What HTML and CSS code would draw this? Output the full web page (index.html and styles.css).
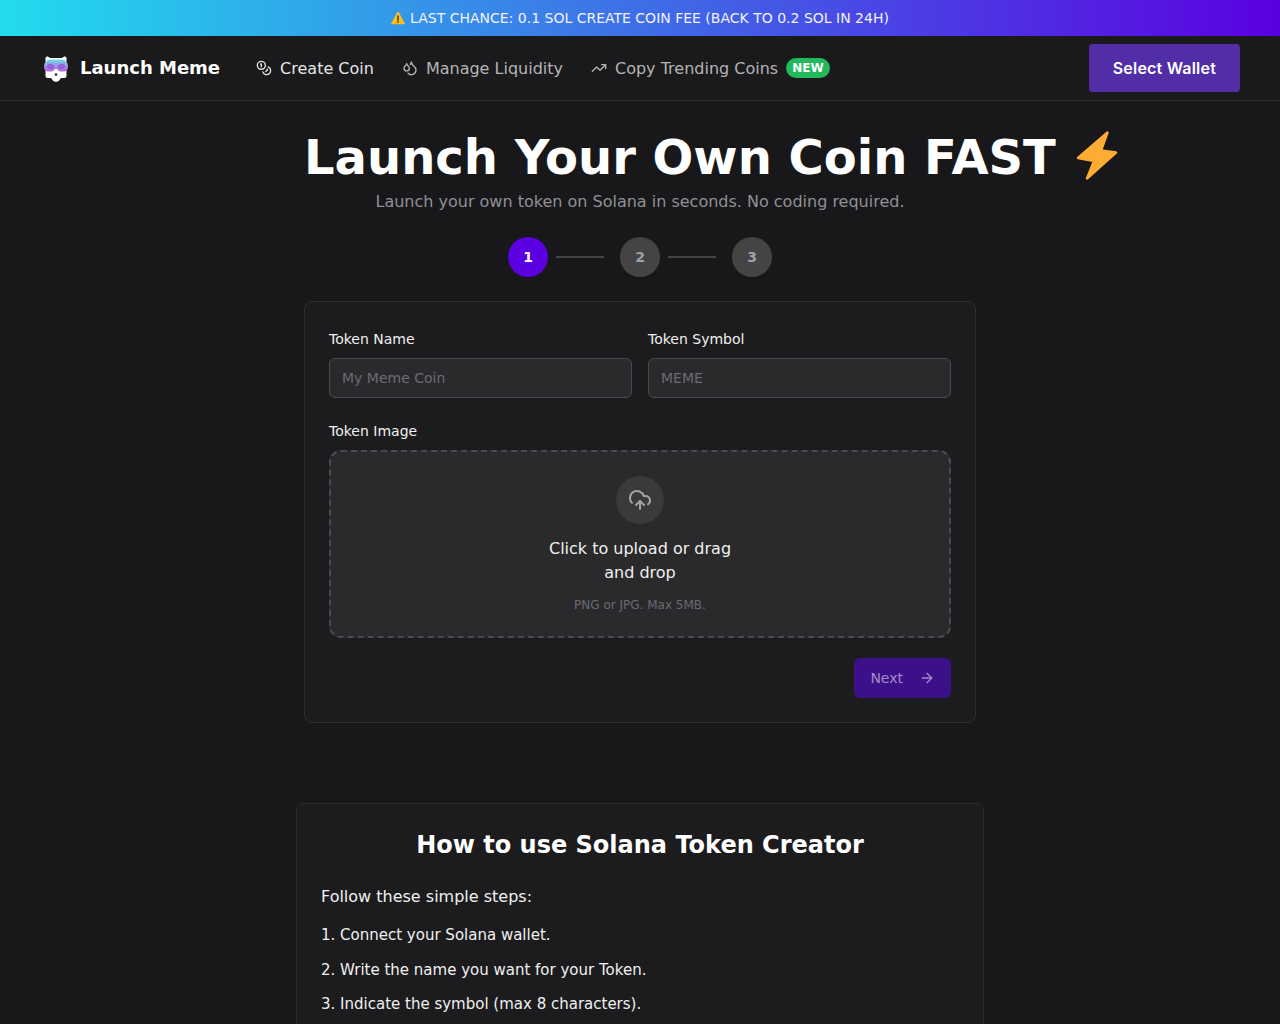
FILE: index.html
```html
<!DOCTYPE html>
<html lang="en">
<head>
    <meta charset="UTF-8">
    <meta name="viewport" content="width=device-width, initial-scale=1.0">
    <title>Launch Meme</title>
    <link rel="stylesheet" href="styles.css">
</head>
<body>

    <!-- Promo banner -->
    <div class="banner">
        <svg class="banner-icon" viewBox="0 0 16 16">
            <path d="M8 1.2 15.2 14.4H.8z" fill="#fbbf24" stroke="#fbbf24" stroke-width="1.2" stroke-linejoin="round"/>
            <path d="M8 5.6v4.6" stroke="#3a2c08" stroke-width="1.6" stroke-linecap="round"/>
            <circle cx="8" cy="12.4" r="1" fill="#3a2c08"/>
        </svg>
        <span>LAST CHANCE: 0.1 SOL CREATE COIN FEE (BACK TO 0.2 SOL IN 24H)</span>
    </div>

    <header class="nav">
        <div class="nav-left">
            <a class="brand">
                <svg class="brand-logo" viewBox="0 0 24 26">
                    <defs>
                        <linearGradient id="goggle" x1="0" y1="0" x2="0" y2="1">
                            <stop offset="0" stop-color="#6fe0e6"/>
                            <stop offset="0.4" stop-color="#8fa8e6"/>
                            <stop offset="1" stop-color="#b860dc"/>
                        </linearGradient>
                    </defs>
                    <path d="M1.500 6V1.500L3.500.3 6 2h12L20.500.3l2 1.200V6zM1.500 13h21v7q0 2-2 2H18q-1.500 0-2 1.300-1 2.700-4 2.700t-4-2.700Q7.500 22 6 22H3.500q-2 0-2-2z" fill="#fff"/>
                    <path d="M6 3.500h12q3 0 5 3 1 1.500 1 4 0 5-4.500 5H17q-2 0-3-1.500-1-1-2-1t-2 1Q9 15.500 7 15.500H4.500Q0 15.500 0 10.500q0-2.500 1-4 2-3 5-3z" fill="url(#goggle)"/>
                    <ellipse cx="6.500" cy="10.500" rx="3.500" ry="2.700" fill="#9a5fd8"/>
                    <ellipse cx="17.500" cy="10.500" rx="3.500" ry="2.700" fill="#9a5fd8"/>
                    <circle cx="12" cy="18.500" r="1.300" fill="#2a1f3a"/>
                </svg>
                <span class="brand-name">Launch Meme</span>
            </a>
            <nav class="nav-links">
                <a class="nav-link nav-link-active">
                    <svg class="icon" viewBox="0 0 24 24"><circle cx="8" cy="8" r="6"/><path d="M18.090 10.370A6 6 0 1 1 10.340 18"/><path d="M7 6h1v4"/><path d="m16.710 13.880.7.71-2.820 2.820"/></svg>
                    Create Coin
                </a>
                <a class="nav-link">
                    <svg class="icon" viewBox="0 0 24 24"><path d="M7 16.300c2.200 0 4-1.830 4-4.050 0-1.160-.57-2.260-1.710-3.190S7.290 6.750 7 5.300c-.29 1.450-1.140 2.840-2.290 3.760S3 11.100 3 12.250c0 2.220 1.800 4.050 4 4.050z"/><path d="M12.560 6.600A10.970 10.970 0 0 0 14 3.020c.5 2.500 2 4.900 4 6.500s3 3.500 3 5.500a6.980 6.980 0 0 1-11.910 4.970"/></svg>
                    Manage Liquidity
                </a>
                <a class="nav-link">
                    <svg class="icon" viewBox="0 0 24 24"><polyline points="22 7 13.500 15.500 8.500 10.500 2 17"/><polyline points="16 7 22 7 22 13"/></svg>
                    Copy Trending Coins
                    <span class="badge">NEW</span>
                </a>
            </nav>
        </div>
        <button class="wallet-btn">Select Wallet</button>
    </header>

    <main class="content">
        <section class="hero">
            <h1 class="hero-title">
                Launch Your Own Coin FAST
                <svg class="bolt" viewBox="0 0 42 51"><polygon points="31.500,2.500 25,20.500 40,22.500 11,48.500 18,31 2,28" fill="#ffac33" stroke="#ffac33" stroke-width="2.500" stroke-linejoin="round"/></svg>
            </h1>
            <p class="hero-sub">Launch your own token on Solana in seconds. No coding required.</p>
        </section>

        <!-- Steps -->
        <div class="steps">
            <div class="step step-active">1</div>
            <div class="step-line"></div>
            <div class="step">2</div>
            <div class="step-line"></div>
            <div class="step">3</div>
        </div>

        <form class="card">
            <div class="field-row">
                <div class="field">
                    <label class="label">Token Name</label>
                    <input class="input" type="text" placeholder="My Meme Coin">
                </div>
                <div class="field">
                    <label class="label">Token Symbol</label>
                    <input class="input" type="text" placeholder="MEME">
                </div>
            </div>

            <div class="field field-image">
                <label class="label">Token Image</label>
                <div class="dropzone">
                    <div class="upload-circle">
                        <svg class="icon upload-icon" viewBox="0 0 24 24"><path d="M12 13v8"/><path d="M4 14.899A7 7 0 1 1 15.710 8h1.790a4.500 4.500 0 0 1 2.500 8.242"/><path d="m8 17 4-4 4 4"/></svg>
                    </div>
                    <p class="drop-text">Click to upload or drag and drop</p>
                    <p class="drop-hint">PNG or JPG. Max 5MB.</p>
                </div>
            </div>

            <div class="form-actions">
                <button class="next-btn" type="button" disabled>
                    Next
                    <svg class="icon" viewBox="0 0 24 24"><path d="M5 12h14"/><path d="m12 5 7 7-7 7"/></svg>
                </button>
            </div>
        </form>

        <section class="howto">
            <h2 class="howto-title">How to use Solana Token Creator</h2>
            <p class="howto-intro">Follow these simple steps:</p>
            <p class="howto-step">1. Connect your Solana wallet.</p>
            <p class="howto-step">2. Write the name you want for your Token.</p>
            <p class="howto-step">3. Indicate the symbol (max 8 characters).</p>
        </section>
    </main>

</body>
</html>
```

FILE: styles.css
```css
* {
    box-sizing: border-box;
}

html,
body {
    height: 1024px;
    overflow: hidden;
}

body {
    margin: 0;
    background-color: #18181a;
    color: #fff;
    font-family: "DejaVu Sans", sans-serif;
}

.banner {
    height: 36px;
    display: flex;
    align-items: center;
    justify-content: center;
    gap: 5px;
    background: linear-gradient(90deg, #22dcee, #5b00e0);
    font-size: 14px;
    color: #f2f2ff;
}

.banner-icon {
    width: 14px;
    height: 14px;
}

.nav {
    height: 65px;
    padding: 0 40px 0 44px;
    display: flex;
    align-items: center;
    justify-content: space-between;
    border-bottom: 1px solid #2c2c2e;
    background-color: #1a1a1c;
}

.nav-left {
    display: flex;
    align-items: center;
    gap: 36px;
}

.brand {
    display: flex;
    align-items: center;
    gap: 12px;
    font-size: 18px;
    font-weight: 700;
}

.brand-logo {
    width: 24px;
    height: 26px;
    margin-top: 2px;
}

.brand-name {
    padding-bottom: 2px;
}

.nav-links {
    display: flex;
    align-items: center;
    gap: 28px;
}

.nav-link {
    display: flex;
    align-items: center;
    gap: 8px;
    font-size: 16px;
    color: #b4b4b4;
}

.nav-link-active {
    color: #e5e5e5;
}

.icon {
    width: 16px;
    height: 16px;
    fill: none;
    stroke: currentColor;
    stroke-width: 2;
    stroke-linecap: round;
    stroke-linejoin: round;
}

.badge {
    height: 20px;
    padding: 0 6px;
    display: flex;
    align-items: center;
    border-radius: 10px;
    background-color: #22b85c;
    color: #fff;
    font-size: 12px;
    font-weight: 700;
}

.wallet-btn {
    height: 48px;
    padding: 0 24px;
    border: none;
    border-radius: 4px;
    background-color: #512da8;
    color: #fff;
    font-family: Inter, sans-serif;
    font-size: 16px;
    font-weight: 600;
    letter-spacing: 0.2px;
}

.content {
    display: flex;
    flex-direction: column;
    align-items: center;
}

.hero {
    width: 672px;
    padding-top: 24px;
}

.hero-title {
    margin: 0;
    display: flex;
    align-items: center;
    gap: 20px;
    white-space: nowrap;
    font-size: 48px;
    line-height: 64px;
    font-weight: 700;
}

.bolt {
    width: 42px;
    height: 51px;
    flex: none;
    margin-bottom: 3px;
}

.hero-sub {
    margin: 0;
    padding-top: 1px;
    text-align: center;
    color: #909096;
    font-size: 16px;
    line-height: 24px;
}

.steps {
    margin-top: 23px;
    display: flex;
    align-items: center;
}

.step {
    width: 40px;
    height: 40px;
    display: flex;
    align-items: center;
    justify-content: center;
    border-radius: 50%;
    background-color: #444;
    color: #9ca3af;
    font-size: 14px;
    font-weight: 700;
}

.step-active {
    background-color: #5b00e0;
    color: #fff;
}

.step-line {
    width: 48px;
    height: 2px;
    margin: 0 16px 0 8px;
    background-color: #444;
}

.card {
    width: 672px;
    margin-top: 24px;
    padding: 24px;
    border: 1px solid #2e2e30;
    border-radius: 8px;
    background-color: #1c1c1e;
}

.field-row {
    display: grid;
    grid-template-columns: 1fr 1fr;
    gap: 16px;
}

.label {
    display: block;
    margin-bottom: 8px;
    padding-top: 2px;
    font-size: 14px;
    line-height: 22px;
    color: #f0f0f0;
}

.input {
    width: 100%;
    height: 40px;
    padding: 0 12px;
    border: 1px solid #4b4b4f;
    border-radius: 6px;
    background-color: #2a2a2c;
    color: #fff;
    font-family: inherit;
    font-size: 14px;
}

.input::placeholder {
    color: #6a6b73;
}

.field-image {
    margin-top: 20px;
}

.dropzone {
    height: 188px;
    padding-top: 24px;
    display: flex;
    flex-direction: column;
    align-items: center;
    border: 2px dashed #4b4b4f;
    border-radius: 12px;
    background-color: #2a2a2c;
}

.upload-circle {
    width: 48px;
    height: 48px;
    display: flex;
    align-items: center;
    justify-content: center;
    border-radius: 50%;
    background-color: #3a3a3c;
    color: #a3a3a3;
}

.upload-icon {
    width: 24px;
    height: 24px;
}

.drop-text {
    width: 200px;
    margin: 13px 0 0;
    text-align: center;
    font-size: 16px;
    line-height: 24px;
    color: #f0f0f0;
}

.drop-hint {
    margin: 12px 0 0;
    font-size: 12px;
    line-height: 16px;
    color: #6a6b73;
}

.form-actions {
    margin-top: 20px;
    display: flex;
    justify-content: flex-end;
}

.next-btn {
    height: 40px;
    padding: 0 16px;
    display: flex;
    align-items: center;
    gap: 16px;
    border: none;
    border-radius: 6px;
    background-color: #3c1088;
    color: #a78bc8;
    font-family: inherit;
    font-size: 14px;
}

.howto {
    width: 688px;
    height: 400px;
    margin-top: 80px;
    padding: 25px 24px 24px;
    border: 1px solid #2e2e30;
    border-radius: 8px;
    background-color: #1c1c1e;
}

.howto-title {
    margin: 0 0 24px;
    text-align: center;
    font-size: 24px;
    line-height: 32px;
    font-weight: 700;
}

.howto-intro {
    margin: 0 0 14px;
    font-size: 16px;
    line-height: 24px;
    color: #f0f0f0;
}

.howto-step {
    margin: 0 0 10.500px;
    font-size: 15px;
    line-height: 24px;
    color: #f0f0f0;
}
```
